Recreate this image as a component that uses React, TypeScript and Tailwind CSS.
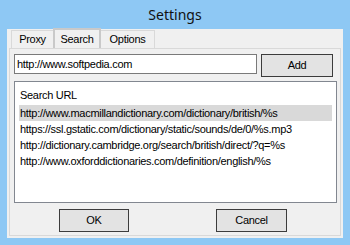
import React from "react";

const rows = [
  "http://www.macmillandictionary.com/dictionary/british/%s",
  "https://ssl.gstatic.com/dictionary/static/sounds/de/0/%s.mp3",
  "http://dictionary.cambridge.org/search/british/direct/?q=%s",
  "http://www.oxforddictionaries.com/definition/english/%s",
];

export default function App() {
  return (
    <div
      className="w-[350px] h-[245px] bg-[#8ec8f4] flex flex-col text-[#000] tracking-[-0.3px]"
      style={{ fontFamily: '"Liberation Sans", Arial, sans-serif' }}
    >
      <div className="h-[29px] flex items-center justify-center text-[14px] text-[#111] tracking-normal" style={{ fontFamily: '"Noto Sans", "Liberation Sans", sans-serif' }}>
        Settings
      </div>
      <div className="mx-[7px] w-[336px] h-[209px] bg-[#f0f0f0] flex flex-col">
        {/* tabs */}
        <div className="flex items-end h-[19px] pl-[4px] text-[11px]">
          <div className="h-[18px] w-[43px] border border-b-0 border-[#d9d9d9] bg-[#f0f0f0] flex items-center justify-center">
            Proxy
          </div>
          <div className="h-[20px] w-[48px] border-2 border-b-0 border-[#c9c9c9] bg-[#f0f0f0] flex items-center justify-center -ml-[1px] relative z-10">
            Search
          </div>
          <div className="h-[18px] w-[55px] border border-b-0 border-[#d9d9d9] bg-[#f0f0f0] flex items-center justify-center -ml-[1px]">
            Options
          </div>
        </div>
        {/* panel */}
        <div className="ml-[2px] w-[332px] h-[188px] border border-[#d9d9d9] bg-[#f0f0f0] flex flex-col px-[4px] pt-[5px]">
          <div className="flex items-start">
            <div className="w-[243px] h-[20px] border border-[#7a7a7a] bg-white flex items-center pl-[2px] text-[11px]">
              http://www.softpedia.com
            </div>
            <div className="ml-[4px] w-[72px] h-[23px] border border-[#3c3c3c] bg-[#e3e3e3] flex items-center justify-center text-[11px]">
              Add
            </div>
          </div>
          <div className="mt-[4px] w-[323px] h-[122px] border border-[#828790] bg-white flex flex-col pt-[5px] px-[4px] text-[11px]">
            <div className="h-[16px] flex items-center pl-[1px]">Search URL</div>
            <div className="h-[2px]" />
            {rows.map((r, i) => (
              <div
                key={i}
                className={
                  "h-[16px] flex items-center pl-[1px] whitespace-nowrap " +
                  (i === 0 ? "bg-[#d9d9d9]" : "")
                }
              >
                {r}
              </div>
            ))}
          </div>
          <div className="flex mt-[6px]">
            <div className="ml-[45px] w-[70px] h-[23px] border border-[#3c3c3c] bg-[#e3e3e3] flex items-center justify-center text-[11px]">
              OK
            </div>
            <div className="ml-[87px] w-[71px] h-[23px] border border-[#3c3c3c] bg-[#e3e3e3] flex items-center justify-center text-[11px]">
              Cancel
            </div>
          </div>
        </div>
      </div>
    </div>
  );
}
